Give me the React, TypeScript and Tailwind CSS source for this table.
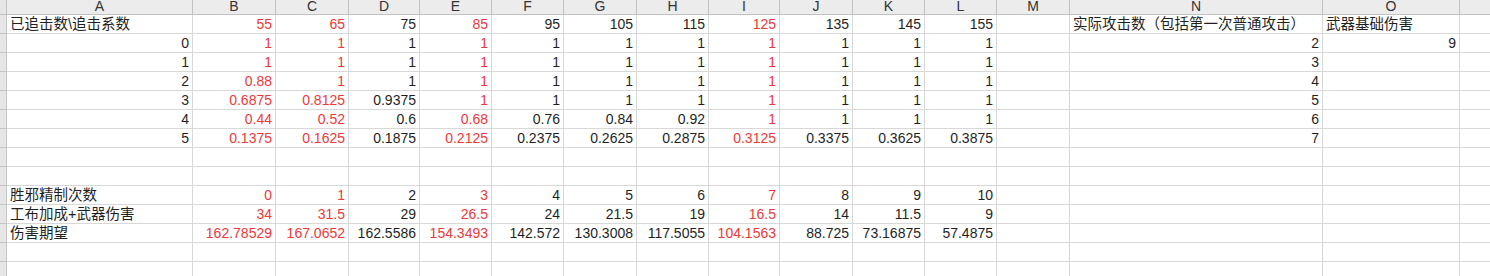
import * as React from 'react';

type Cell = { v: string; red?: boolean; left?: boolean };

const COLS = ['A', 'B', 'C', 'D', 'E', 'F', 'G', 'H', 'I', 'J', 'K', 'L', 'M', 'N', 'O', ''];

// which of B..L are drawn in red
const RED = [true, true, false, true, false, false, false, true, false, false, false];

const coef: string[][] = [
  ['1', '1', '1', '1', '1', '1', '1', '1', '1', '1', '1'],
  ['1', '1', '1', '1', '1', '1', '1', '1', '1', '1', '1'],
  ['0.88', '1', '1', '1', '1', '1', '1', '1', '1', '1', '1'],
  ['0.6875', '0.8125', '0.9375', '1', '1', '1', '1', '1', '1', '1', '1'],
  ['0.44', '0.52', '0.6', '0.68', '0.76', '0.84', '0.92', '1', '1', '1', '1'],
  ['0.1375', '0.1625', '0.1875', '0.2125', '0.2375', '0.2625', '0.2875', '0.3125', '0.3375', '0.3625', '0.3875'],
];

const span = (vals: string[]): Cell[] => vals.map((v, i) => ({ v, red: RED[i] }));

function buildRows(): Cell[][] {
  const rows: Cell[][] = [];
  const empty = (): Cell[] => Array.from({ length: 16 }, () => ({ v: '' }));

  rows.push([
    { v: '已追击数\\追击系数', left: true },
    ...span(['55', '65', '75', '85', '95', '105', '115', '125', '135', '145', '155']),
    { v: '' },
    { v: '实际攻击数（包括第一次普通攻击）', left: true },
    { v: '武器基础伤害', left: true },
    { v: '' },
  ]);

  coef.forEach((r, i) => {
    rows.push([
      { v: String(i) },
      ...span(r),
      { v: '' },
      { v: String(i + 2) },
      { v: i === 0 ? '9' : '' },
      { v: '' },
    ]);
  });

  rows.push(empty(), empty());

  const tail = (label: string, vals: string[]): Cell[] => [
    { v: label, left: true },
    ...span(vals),
    { v: '' },
    { v: '' },
    { v: '' },
    { v: '' },
  ];
  rows.push(tail('胜邪精制次数', ['0', '1', '2', '3', '4', '5', '6', '7', '8', '9', '10']));
  rows.push(tail('工布加成+武器伤害', ['34', '31.5', '29', '26.5', '24', '21.5', '19', '16.5', '14', '11.5', '9']));
  rows.push(
    tail('伤害期望', [
      '162.78529', '167.0652', '162.5586', '154.3493', '142.572', '130.3008',
      '117.5055', '104.1563', '88.725', '73.16875', '57.4875',
    ])
  );
  rows.push(empty(), empty());
  return rows;
}

export default function App() {
  const rows = buildRows();

  return (
    <div
      className="h-[276px] w-[1490px] overflow-hidden bg-white text-[14px] text-[#1f1f1f]"
      style={{ fontFamily: '"Liberation Sans", "Noto Sans CJK SC", sans-serif' }}
    >
      <div className="grid grid-cols-[7px_186px_83px_73px_71px_72px_72px_73px_72px_71px_73px_72px_72px_73px_253px_137px_60px] auto-rows-[19px] grid-rows-[15px]">
        {/* column header strip */}
        <div className="border-r border-b border-[#c2c2c2] bg-[#e6e6e6]" />
        {COLS.map((c, i) => (
          <div
            key={'h' + i}
            className="flex items-end justify-center border-r border-b border-[#c2c2c2] bg-[#ececec] pb-[1px] leading-[14px] text-[#333]"
          >
            {c}
          </div>
        ))}

        {rows.map((row, r) => (
          <React.Fragment key={r}>
            <div className="border-r border-b border-[#c6c6c6] bg-[#e6e6e6]" />
            {row.map((cell, c) => (
              <div
                key={c}
                className={
                  'flex items-center overflow-visible whitespace-nowrap border-r border-b border-[#d8d8d8] leading-[18px] ' +
                  (cell.left ? 'justify-start pl-[3px] text-[14.5px] ' : 'justify-end pr-[3px] ') +
                  (cell.red ? 'text-[#ec3a3a]' : '')
                }
              >
                {cell.v}
              </div>
            ))}
          </React.Fragment>
        ))}
      </div>
    </div>
  );
}
